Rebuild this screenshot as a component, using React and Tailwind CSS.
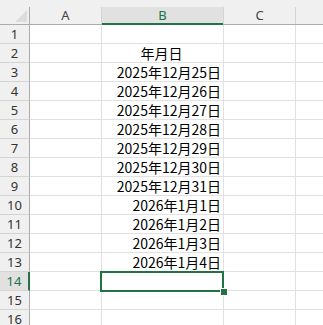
import React from "react";

const rows = [
  "",
  "年月日",
  "2025年12月25日",
  "2025年12月26日",
  "2025年12月27日",
  "2025年12月28日",
  "2025年12月29日",
  "2025年12月30日",
  "2025年12月31日",
  "2026年1月1日",
  "2026年1月2日",
  "2026年1月3日",
  "2026年1月4日",
  "",
  "",
  "",
];

const font = { fontFamily: '"Noto Sans CJK JP", "Noto Sans", sans-serif' };

export default function App() {
  return (
    <div className="w-[323px] h-[325px] overflow-hidden bg-white" style={font}>
      {/* header band */}
      <div className="bg-[#f0f0f0] pt-[7px]">
        <div className="grid grid-cols-[30px_72px_122px_72px_1fr] h-[18px] border-b border-[#ababab] text-[13px] text-[#444]" style={{ fontFamily: '"Noto Sans", sans-serif' }}>
          <div className="relative border-r border-[#ababab]">
            <svg className="absolute left-[15px] top-[3px]" width="12" height="12" viewBox="0 0 12 12">
              <polygon points="12,0 12,12 0,12" fill="#dcdcdc" />
            </svg>
          </div>
          <div className="border-r border-[#d4d4d4] flex items-center justify-center leading-none">A</div>
          <div className="relative border-r border-[#d4d4d4] bg-[#e1e1e1] flex items-center justify-center leading-none text-[#217346]">
            B
            <div className="absolute left-0 right-0 -bottom-[1px] h-[2px] bg-[#217346]" />
          </div>
          <div className="border-r border-[#d4d4d4] flex items-center justify-center leading-none">C</div>
          <div />
        </div>
      </div>
      {rows.map((text, i) => {
        const n = i + 1;
        const sel = n === 14;
        return (
          <div key={n} className="grid grid-cols-[30px_72px_122px_72px_1fr] h-[19px]">
            <div
              className={
                "flex items-center justify-center text-[13px] leading-none border-b " +
                (sel
                  ? "bg-[#e1e1e1] text-[#217346] border-[#d4d4d4] border-r-2 border-r-[#217346]"
                  : "bg-[#f0f0f0] text-[#333] border-[#d4d4d4] border-r border-r-[#ababab]")
              }
              style={{ fontFamily: '"Noto Sans", sans-serif' }}
            >
              {n}
            </div>
            <div className="border-r border-b border-[#e1e1e1]" />
            <div
              className={
                "relative border-r border-b border-[#e1e1e1] flex items-center text-[14px] leading-none text-black pr-[2px] " +
                (n === 2 ? "justify-center" : "justify-end")
              }
            >
              {text}
              {sel && (
                <>
                  <div className="absolute z-10 -left-[2px] -top-[1px] w-[124px] h-[21px] border-2 border-[#217346]" />
                  <div className="absolute z-20 left-[118px] top-[16px] w-[8px] h-[8px] bg-[#217346] border border-white" />
                </>
              )}
            </div>
            <div className="border-r border-b border-[#e1e1e1]" />
            <div className="border-b border-[#e1e1e1]" />
          </div>
        );
      })}
    </div>
  );
}
